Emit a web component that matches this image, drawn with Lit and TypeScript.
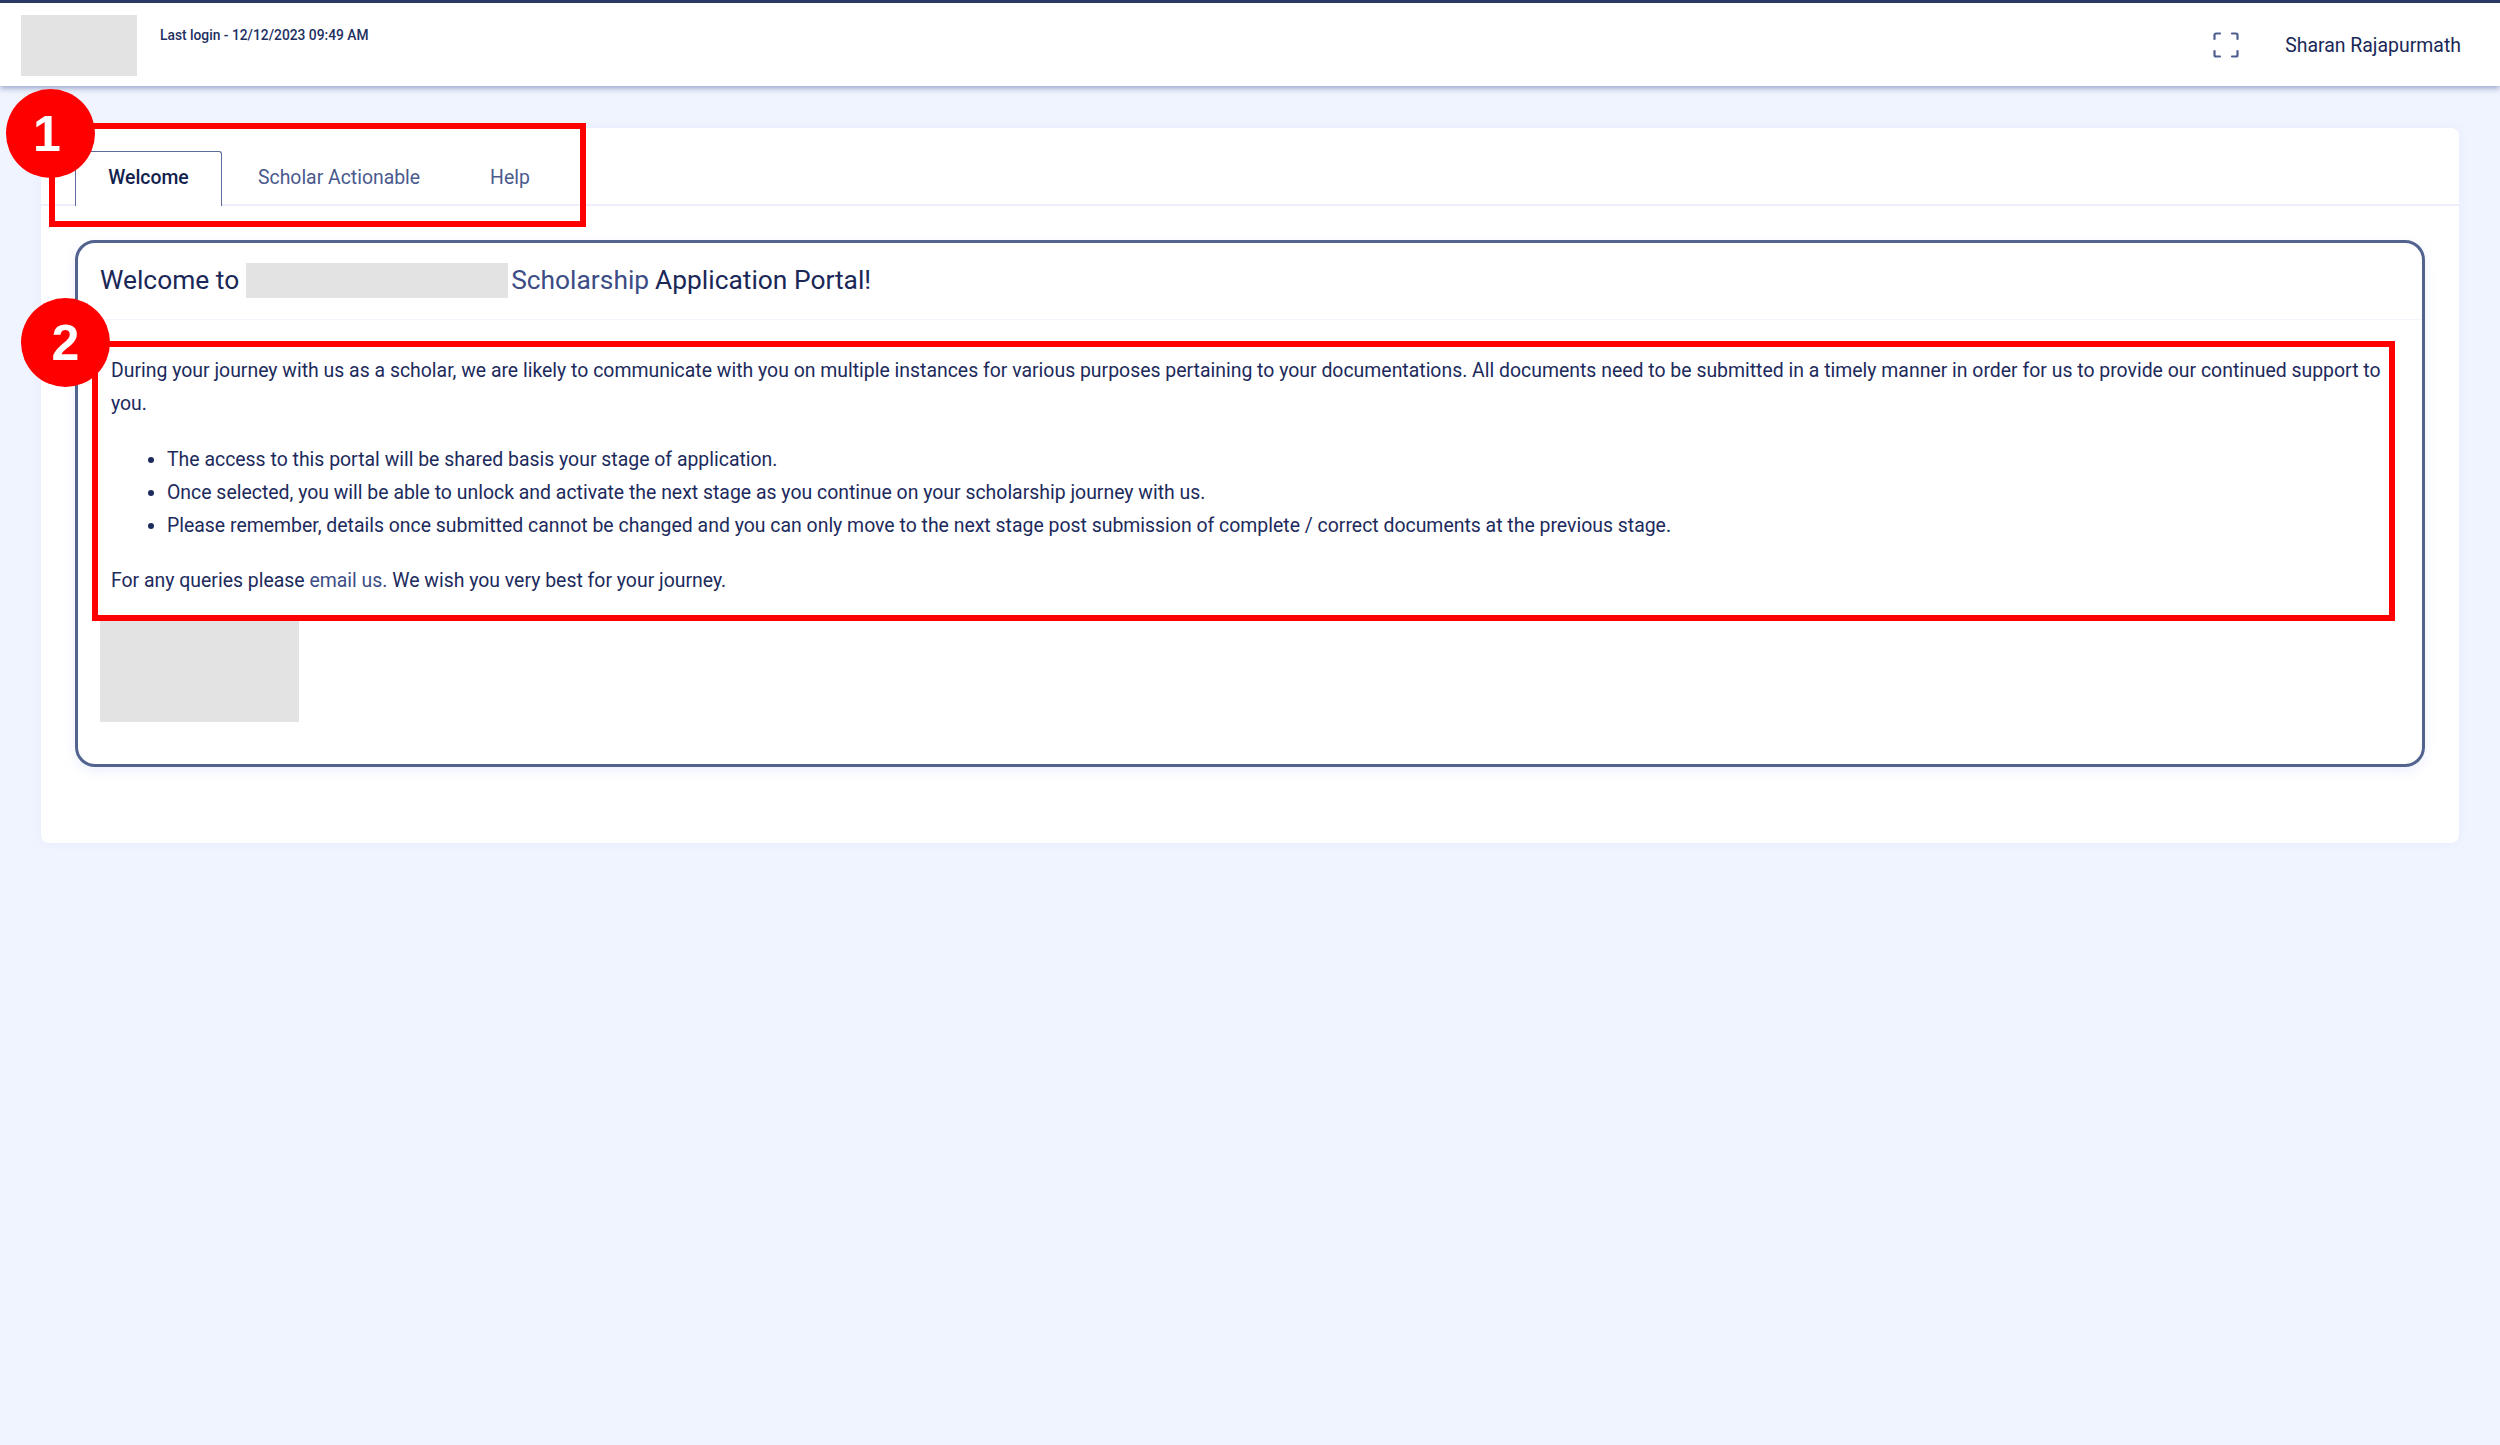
import { LitElement, html, css } from "lit";
import { customElement } from "lit/decorators.js";

@customElement("app-root")
export class AppRoot extends LitElement {
  static styles = css`
    :host {
      display: block;
      position: relative;
      min-height: 1445px;
      background: #f0f4fe;
      font-family: Roboto, "Liberation Sans", sans-serif;
      color: #1a2757;
      overflow: hidden;
    }
    * { box-sizing: border-box; }
    .topbar {
      display: flex;
      height: 86px;
      padding: 12px 39px 0 21px;
      background: #fff;
      border-top: 3px solid #2b3a63;
      box-shadow: 0 2px 6px rgba(96, 112, 170, 0.65);
    }
    .logo { width: 116px; height: 61px; background: #e3e3e3; flex: none; }
    .login { margin-left: 23px; margin-top: 12px; font-size: 13.8px; line-height: 16px; font-weight: 500; color: #22305f; }
    .right { margin-left: auto; display: flex; align-items: flex-start; padding-top: 18px; gap: 46px; }
    .expand { width: 26px; height: 26px; display: block; margin-top: -1px; }
    .name { font-size: 19.45px; line-height: 24px; white-space: nowrap; margin-top: 1px; }
    .card {
      margin: 42px 41px 0;
      height: 715px;
      background: #fff;
      border-radius: 8px;
      box-shadow: 0 0 10px rgba(210, 220, 250, 0.35);
    }
    .tabs {
      display: flex;
      height: 78px;
      padding: 23px 0 0 34px;
      border-bottom: 2px solid #edf0fb;
    }
    .tab {
      display: flex;
      align-items: center;
      justify-content: center;
      height: 55px;
      padding-bottom: 3px;
      font-size: 19.4px;
      color: #4a5a8e;
    }
    .tab.active {
      width: 147px;
      color: #131f4d;
      font-weight: 500;
      background: #fff;
      border: 1.5px solid #5d6c9c;
      border-bottom: 0;
      border-radius: 3px 3px 0 0;
    }
    .t2 { margin-left: 36px; }
    .t3 { margin-left: 70px; }
    .panel {
      margin: 34px 34px 0 34px;
      height: 527px;
      border: 3px solid #53638f;
      border-radius: 20px;
      background: #fff;
      box-shadow: 0 4px 12px rgba(200, 212, 248, 0.35);
      padding: 0 0 0 22px;
    }
    .title {
      display: flex;
      align-items: center;
      height: 77px;
      margin-left: -22px;
      padding: 0 0 2px 22px;
      border-bottom: 1.5px solid #f3f5fc;
      font-size: 26.35px;
      white-space: nowrap;
    }
    .mask { width: 262px; height: 35px; background: #e3e3e3; margin: 0 3px 0 7px; }
    .hl { color: #3d4d85; margin-right: 6px; }
    .body { padding: 34px 30px 0 11px; font-size: 19.43px; line-height: 33.3px; color: #1c2a5c; }
    .body p { margin: 0; }
    .body ul { margin: 22px 0; padding: 0 0 0 56px; }
    .body a { color: #3d4d85; text-decoration: none; }
    .mask2 { width: 199px; height: 101px; background: #e3e3e3; margin-top: 23px; }
    .box { position: absolute; border: 6px solid #fe0000; }
    .b1 { left: 49px; top: 123px; width: 537px; height: 104px; }
    .b2 { left: 92px; top: 341px; width: 2303px; height: 280px; }
    .num {
      position: absolute;
      width: 89px;
      height: 89px;
      border-radius: 50%;
      background: #fe0000;
      color: #fff;
      display: flex;
      align-items: center;
      justify-content: center;
      font: 700 50px "Liberation Sans", sans-serif;
    }
    .n1 { left: 6px; top: 89px; padding-right: 7px; }
    .n2 { left: 21px; top: 298px; }
  `;

  render() {
    return html`
      <header class="topbar">
        <div class="logo"></div>
        <div class="login">Last login - 12/12/2023 09:49 AM</div>
        <div class="right">
          <svg class="expand" viewBox="0 0 26 26" fill="none" stroke="#4f5f8f" stroke-width="2.2" stroke-linecap="round" stroke-linejoin="round">
            <path d="M1.5 7V3a1.5 1.5 0 0 1 1.5-1.5h4M19 1.5h4A1.5 1.5 0 0 1 24.5 3v4M24.5 19v4a1.5 1.5 0 0 1-1.5 1.5h-4M7 24.5H3A1.5 1.5 0 0 1 1.5 23v-4" />
          </svg>
          <span class="name">Sharan Rajapurmath</span>
        </div>
      </header>
      <main class="card">
        <nav class="tabs">
          <div class="tab active">Welcome</div>
          <div class="tab t2">Scholar Actionable</div>
          <div class="tab t3">Help</div>
        </nav>
        <section class="panel">
          <div class="title">
            <span>Welcome to</span><span class="mask"></span><span class="hl">Scholarship</span><span>Application Portal!</span>
          </div>
          <div class="body">
            <p>During your journey with us as a scholar, we are likely to communicate with you on multiple instances for various purposes pertaining to your documentations. All documents need to be submitted in a timely manner in order for us to provide our continued support to you.</p>
            <ul>
              <li>The access to this portal will be shared basis your stage of application.</li>
              <li>Once selected, you will be able to unlock and activate the next stage as you continue on your scholarship journey with us.</li>
              <li>Please remember, details once submitted cannot be changed and you can only move to the next stage post submission of complete / correct documents at the previous stage.</li>
            </ul>
            <p>For any queries please <a>email us.</a> We wish you very best for your journey.</p>
          </div>
          <div class="mask2"></div>
        </section>
      </main>
      <div class="box b1"></div>
      <div class="box b2"></div>
      <div class="num n1">1</div>
      <div class="num n2">2</div>
    `;
  }
}
